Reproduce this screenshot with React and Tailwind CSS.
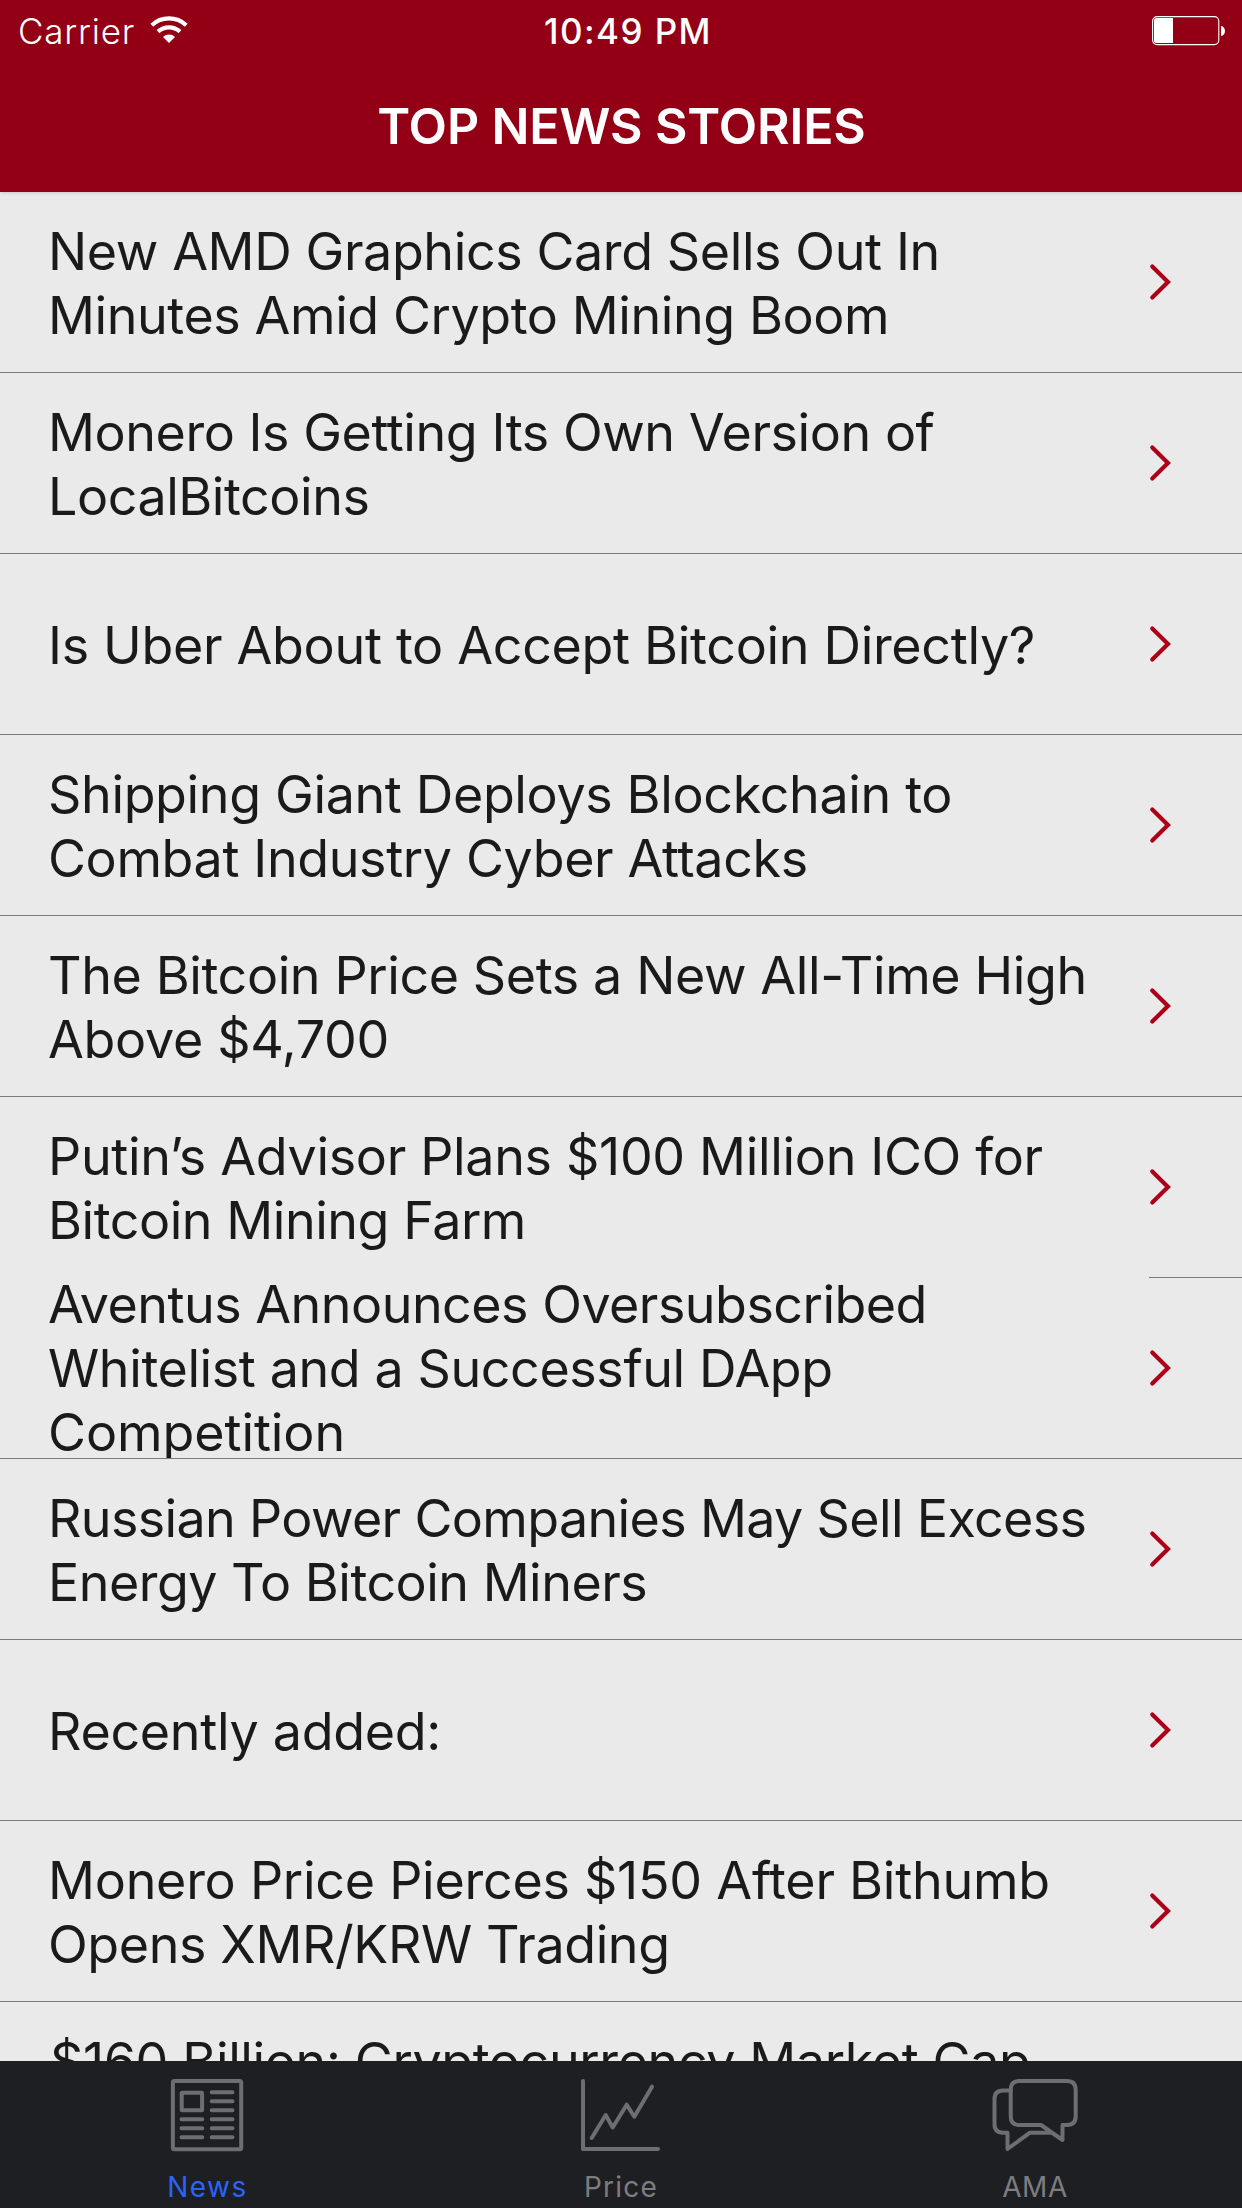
import React from "react";

const stories = [
  [
    ["New AMD Graphics Card Sells Out In", "tracking-[-0.4px]"],
    ["Minutes Amid Crypto Mining Boom", "tracking-[-0.42px]"],
  ],
  [
    ["Monero Is Getting Its Own Version of", "tracking-[-0.448px]"],
    ["LocalBitcoins", "tracking-[-0.46px]"],
  ],
  [["Is Uber About to Accept Bitcoin Directly?", "tracking-[-0.32px]"]],
  [
    ["Shipping Giant Deploys Blockchain to", "tracking-[-0.36px]"],
    ["Combat Industry Cyber Attacks", "tracking-[-0.37px]"],
  ],
  [
    ["The Bitcoin Price Sets a New All-Time High", "tracking-[-0.4px]"],
    ["Above $4,700", "tracking-[-0.3px]"],
  ],
  [
    ["Putin’s Advisor Plans $100 Million ICO for", "tracking-[-0.332px]"],
    ["Bitcoin Mining Farm", "tracking-[-0.46px]"],
  ],
  [
    ["Aventus Announces Oversubscribed", "tracking-[-0.52px]"],
    ["Whitelist and a Successful DApp", "tracking-[-0.4px]"],
    ["Competition", "tracking-[-0.08px]"],
  ],
  [
    ["Russian Power Companies May Sell Excess", "tracking-[-0.65px]"],
    ["Energy To Bitcoin Miners", "tracking-[-0.52px]"],
  ],
  [["Recently added:", "tracking-[-0.3px]"]],
  [
    ["Monero Price Pierces $150 After Bithumb", "tracking-[-0.26px]"],
    ["Opens XMR/KRW Trading", "tracking-[-0.4px]"],
  ],
  [
    ["$160 Billion: Cryptocurrency Market Cap", "pl-[2px] tracking-[-0.38px]"],
    ["\u00a0", "tracking-normal"],
  ],
];

function WifiIcon() {
  return (
    <svg width="38" height="28" viewBox="0 0 38 28" fill="none" stroke="#fff">
      <path d="M1.8 9.2A25 25 0 0 1 36.2 9.2" strokeWidth="4.2" />
      <path d="M8 15.6A16.2 16.2 0 0 1 30 15.6" strokeWidth="4.2" />
      <path d="M13 20.9A9 9 0 0 1 25 20.9L19 27Z" fill="#fff" stroke="none" />
    </svg>
  );
}

function BatteryIcon() {
  return (
    <svg width="74" height="30" viewBox="0 0 74 30" fill="none">
      <rect x="0.6" y="0.6" width="66.2" height="28" rx="4.5" stroke="#fff" strokeWidth="1.1" />
      <path d="M4.5 2H21V27H4.5A2.5 2.5 0 0 1 2 24.5V4.5A2.5 2.5 0 0 1 4.5 2Z" fill="#fff" />
      <path d="M69 10C74.3 10.5 74.3 19.5 69 20Z" fill="#fff" />
    </svg>
  );
}

function Chevron() {
  return (
    <svg width="24" height="38" viewBox="0 0 24 38" fill="none" stroke="#ac0019" strokeWidth="4.2" strokeLinecap="round">
      <path d="M3.3 3.4L19 19L3.3 34.6" />
    </svg>
  );
}

const iconProps = { height: 74, fill: "none", stroke: "#6d6e72", strokeWidth: 4, strokeLinecap: "round", strokeLinejoin: "round" };

function NewsIcon() {
  return (
    <svg width="74" viewBox="0 0 74 74" {...iconProps}>
      <rect x="2.9" y="2.9" width="68.3" height="68.3" rx="1.5" />
      <rect x="11.7" y="14.8" width="20.4" height="17.5" rx="0.5" />
      <path d="M41.7 14.3H62.5M41.7 23.3H62.5M41.7 32.3H62.5M41.7 41.3H62.5M41.7 50.3H62.5M41.7 59.3H62.5M11.5 41.3H32.3M11.5 50.3H32.3M11.5 59.3H32.3" />
    </svg>
  );
}

function PriceIcon() {
  return (
    <svg width="82" viewBox="0 0 82 74" {...iconProps}>
      <path d="M3 3V71H78" />
      <path d="M11.7 60L25.7 37L32.7 49.5L46.7 26.7L54.3 38.7L72 8.7" />
    </svg>
  );
}

function ChatIcon() {
  return (
    <svg width="88" viewBox="0 0 88 74" {...iconProps}>
      <path d="M28 3H76Q84.700 3 84.700 12V38Q84.700 47 76 47H71.500V62L50 47H28Q19.700 47 19.700 38V12Q19.700 3 28 3Z" />
      <path d="M19.700 12.500H12Q3.500 12.500 3.500 21V46Q3.500 54.700 12 54.700H16.500V71L39 54.700H59" />
    </svg>
  );
}

const tabs = [
  { name: "News", Icon: NewsIcon, style: "pl-px text-[#2a63ff] tracking-[1.5px]" },
  { name: "Price", Icon: PriceIcon, style: "text-[#7d7d7f] tracking-[1.2px]" },
  { name: "AMA", Icon: ChatIcon, style: "text-[#7d7d7f] tracking-[0.5px]" },
];

function StoryRow({ lines, partialDivider }) {
  const long = lines.length > 2;
  return (
    <li className="flex h-[181px] shrink-0 flex-col">
      <div className="flex h-[180px] items-center overflow-hidden pl-12">
        <h2 className={`w-[1101px] text-[52px] leading-[64px] text-[#1a1a1a] ${long ? "pt-px" : "pt-[3px]"}`}>
          {lines.map(([text, tracking]) => (
            <span key={text} className={`block whitespace-nowrap ${tracking}`}>
              {text}
            </span>
          ))}
        </h2>
        <Chevron />
      </div>
      <div className={`h-px bg-[#7b7b7b] ${partialDivider ? "ml-[1149px]" : ""}`} />
    </li>
  );
}

export default function App() {
  return (
    <div className="flex h-[2208px] w-[1242px] flex-col overflow-hidden bg-[#eaeaea] font-['Inter',sans-serif]">
      <header className="z-10 h-[192px] shrink-0 bg-[#930015] text-white shadow-[0_1px_3px_rgba(0,0,0,0.15)]">
        <div className="grid h-24 grid-cols-[1fr_auto_1fr] items-start pt-2.5 text-[35px] leading-[42px]">
          <div className="flex pl-[18px]">
            <span className="font-[350] tracking-[0.8px]">Carrier</span>
            <span className="ml-[15px] mt-1.5">
              <WifiIcon />
            </span>
          </div>
          <span className="pl-3.5 font-medium tracking-[1.424px]">10:49 PM</span>
          <div className="mt-1.5 flex justify-end pr-4">
            <BatteryIcon />
          </div>
        </div>
        <h1 className="pl-px text-center text-[50px] font-semibold leading-[60px] tracking-[-0.13px]">
          TOP NEWS STORIES
        </h1>
      </header>

      <ul className="flex h-[1869px] shrink-0 flex-col overflow-hidden">
        {stories.map((lines, i) => (
          <StoryRow key={lines[0][0]} lines={lines} partialDivider={i === 5} />
        ))}
      </ul>

      <nav className="grid h-[147px] shrink-0 grid-cols-3 bg-[#1e1f23]">
        {tabs.map(({ name, Icon, style }) => (
          <div key={name} className="flex flex-col items-center pt-[17px]">
            <Icon />
            <span className={`mt-[18px] text-[28px] leading-[34px] ${style}`}>{name}</span>
          </div>
        ))}
      </nav>
    </div>
  );
}
